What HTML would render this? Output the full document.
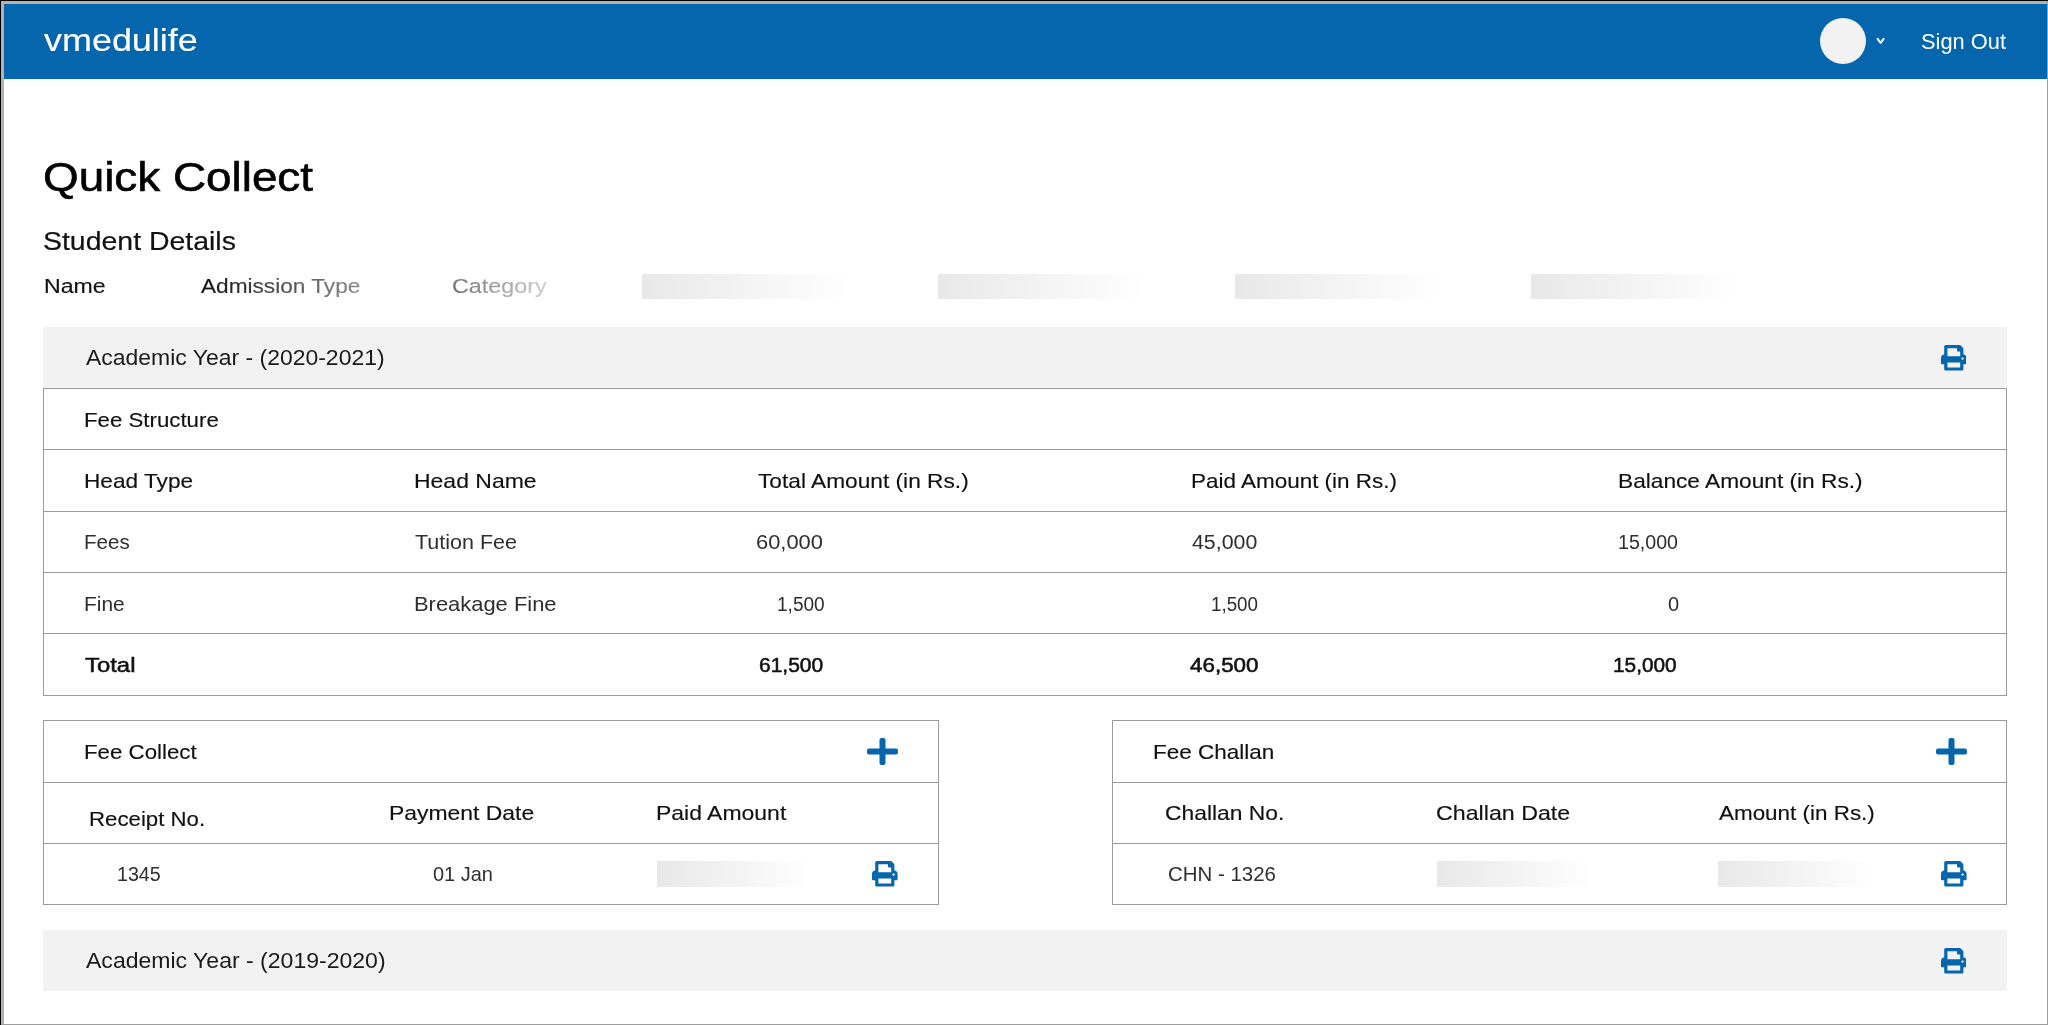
<!DOCTYPE html>
<html><head><meta charset="utf-8"><title>Quick Collect</title>
<style>
html,body{margin:0;padding:0;background:#fff;width:2048px;height:1025px;overflow:hidden;position:relative}
body{font-family:"Liberation Sans",sans-serif}
.ln,.ic,.sk,.t{position:absolute}
.sk{background:linear-gradient(90deg,#e8e8e8 0%,#fefefe 100%)}
.t{white-space:nowrap;line-height:1;transform-origin:0 0}
.g1{background:linear-gradient(90deg,#111 0%,#8a8a8a 100%);-webkit-background-clip:text;background-clip:text;color:transparent}
.g2{background:linear-gradient(90deg,#737373 0%,#d0d0d0 100%);-webkit-background-clip:text;background-clip:text;color:transparent}
</style></head><body>
<div class="ln" style="left:0;top:0;width:2048px;height:1px;background:#000"></div>
<div class="ln" style="left:0;top:0;width:1px;height:1025px;background:#000"></div>
<div class="ln" style="left:1px;top:1px;width:2047px;height:3px;background:#b3b3b3"></div>
<div class="ln" style="left:1px;top:1px;width:3px;height:1024px;background:#b3b3b3"></div>
<div class="ln" style="left:2047px;top:1px;width:1px;height:1024px;background:#a0a0a0"></div>
<div class="ln" style="left:1px;top:1024px;width:2047px;height:1px;background:#9c9c9c"></div>
<div class="ln" style="left:4px;top:4px;width:2043px;height:75px;background:#0565ad"></div>
<div class="ln" style="left:1820px;top:18px;width:46px;height:46px;border-radius:50%;background:#f2f2f2"></div>
<svg class="ic" style="left:1875px;top:36px;width:11px;height:10px" viewBox="0 0 11 10"><path d="M2.6 2.8 L5.6 7.0 L8.6 2.8" fill="none" stroke="#fff" stroke-width="2" stroke-linecap="round" stroke-linejoin="round"/></svg>
<div class="sk" style="left:642px;top:274px;width:200px;height:25px"></div>
<div class="sk" style="left:938px;top:274px;width:200px;height:25px"></div>
<div class="sk" style="left:1235px;top:274px;width:200px;height:25px"></div>
<div class="sk" style="left:1531px;top:274px;width:200px;height:25px"></div>
<div class="ln" style="left:43px;top:327px;width:1964px;height:61px;background:#f2f2f2"></div>
<svg class="ic" style="left:1940.7px;top:345px;width:25.6px;height:25.6px" viewBox="0 0 512 512"><path fill="#0565ad" d="M448 192V77.25c0-8.49-3.37-16.62-9.37-22.63L393.37 9.37c-6-6-14.14-9.37-22.63-9.37H96C78.33 0 64 14.33 64 32v160c-35.35 0-64 28.65-64 64v112c0 8.84 7.16 16 16 16h48v96c0 17.67 14.33 32 32 32h320c17.67 0 32-14.33 32-32v-96h48c8.84 0 16-7.16 16-16V256c0-35.35-28.65-64-64-64zm-64 256H128v-96h256v96zm0-224H128V64h192v48c0 8.84 7.16 16 16 16h48v96zm48 72c-13.25 0-24-10.75-24-24 0-13.26 10.75-24 24-24s24 10.74 24 24c0 13.25-10.75 24-24 24z"/></svg>
<div class="ln" style="left:43px;top:388px;width:1964px;height:1px;background:#9a9a9a"></div>
<div class="ln" style="left:43px;top:449px;width:1964px;height:1px;background:#9a9a9a"></div>
<div class="ln" style="left:43px;top:511px;width:1964px;height:1px;background:#9a9a9a"></div>
<div class="ln" style="left:43px;top:572px;width:1964px;height:1px;background:#9a9a9a"></div>
<div class="ln" style="left:43px;top:633px;width:1964px;height:1px;background:#9a9a9a"></div>
<div class="ln" style="left:43px;top:695px;width:1964px;height:1px;background:#9a9a9a"></div>
<div class="ln" style="left:43px;top:388px;width:1px;height:308px;background:#9a9a9a"></div>
<div class="ln" style="left:2006px;top:388px;width:1px;height:308px;background:#9a9a9a"></div>
<div class="ln" style="left:43px;top:720px;width:896px;height:1px;background:#9a9a9a"></div>
<div class="ln" style="left:43px;top:782px;width:896px;height:1px;background:#9a9a9a"></div>
<div class="ln" style="left:43px;top:843px;width:896px;height:1px;background:#9a9a9a"></div>
<div class="ln" style="left:43px;top:904px;width:896px;height:1px;background:#9a9a9a"></div>
<div class="ln" style="left:43px;top:720px;width:1px;height:185px;background:#9a9a9a"></div>
<div class="ln" style="left:938px;top:720px;width:1px;height:185px;background:#9a9a9a"></div>
<svg class="ic" style="left:867px;top:738px;width:31px;height:27px" viewBox="0 0 31 27"><rect x="0" y="10.5" width="31" height="6" rx="2" fill="#0565ad"/><rect x="12.5" y="0" width="6" height="27" rx="2" fill="#0565ad"/></svg>
<div class="sk" style="left:657px;top:861px;width:150px;height:26px"></div>
<svg class="ic" style="left:872px;top:861px;width:25.6px;height:25.6px" viewBox="0 0 512 512"><path fill="#0565ad" d="M448 192V77.25c0-8.49-3.37-16.62-9.37-22.63L393.37 9.37c-6-6-14.14-9.37-22.63-9.37H96C78.33 0 64 14.33 64 32v160c-35.35 0-64 28.65-64 64v112c0 8.84 7.16 16 16 16h48v96c0 17.67 14.33 32 32 32h320c17.67 0 32-14.33 32-32v-96h48c8.84 0 16-7.16 16-16V256c0-35.35-28.65-64-64-64zm-64 256H128v-96h256v96zm0-224H128V64h192v48c0 8.84 7.16 16 16 16h48v96zm48 72c-13.25 0-24-10.75-24-24 0-13.26 10.75-24 24-24s24 10.74 24 24c0 13.25-10.75 24-24 24z"/></svg>
<div class="ln" style="left:1112px;top:720px;width:895px;height:1px;background:#9a9a9a"></div>
<div class="ln" style="left:1112px;top:782px;width:895px;height:1px;background:#9a9a9a"></div>
<div class="ln" style="left:1112px;top:843px;width:895px;height:1px;background:#9a9a9a"></div>
<div class="ln" style="left:1112px;top:904px;width:895px;height:1px;background:#9a9a9a"></div>
<div class="ln" style="left:1112px;top:720px;width:1px;height:185px;background:#9a9a9a"></div>
<div class="ln" style="left:2006px;top:720px;width:1px;height:185px;background:#9a9a9a"></div>
<svg class="ic" style="left:1936px;top:738px;width:31px;height:27px" viewBox="0 0 31 27"><rect x="0" y="10.5" width="31" height="6" rx="2" fill="#0565ad"/><rect x="12.5" y="0" width="6" height="27" rx="2" fill="#0565ad"/></svg>
<div class="sk" style="left:1437px;top:861px;width:149px;height:26px"></div>
<div class="sk" style="left:1718px;top:861px;width:150px;height:26px"></div>
<svg class="ic" style="left:1941px;top:861px;width:25.6px;height:25.6px" viewBox="0 0 512 512"><path fill="#0565ad" d="M448 192V77.25c0-8.49-3.37-16.62-9.37-22.63L393.37 9.37c-6-6-14.14-9.37-22.63-9.37H96C78.33 0 64 14.33 64 32v160c-35.35 0-64 28.65-64 64v112c0 8.84 7.16 16 16 16h48v96c0 17.67 14.33 32 32 32h320c17.67 0 32-14.33 32-32v-96h48c8.84 0 16-7.16 16-16V256c0-35.35-28.65-64-64-64zm-64 256H128v-96h256v96zm0-224H128V64h192v48c0 8.84 7.16 16 16 16h48v96zm48 72c-13.25 0-24-10.75-24-24 0-13.26 10.75-24 24-24s24 10.74 24 24c0 13.25-10.75 24-24 24z"/></svg>
<div class="ln" style="left:43px;top:930px;width:1964px;height:61px;background:#f2f2f2"></div>
<svg class="ic" style="left:1940.7px;top:948.3px;width:25.6px;height:25.6px" viewBox="0 0 512 512"><path fill="#0565ad" d="M448 192V77.25c0-8.49-3.37-16.62-9.37-22.63L393.37 9.37c-6-6-14.14-9.37-22.63-9.37H96C78.33 0 64 14.33 64 32v160c-35.35 0-64 28.65-64 64v112c0 8.84 7.16 16 16 16h48v96c0 17.67 14.33 32 32 32h320c17.67 0 32-14.33 32-32v-96h48c8.84 0 16-7.16 16-16V256c0-35.35-28.65-64-64-64zm-64 256H128v-96h256v96zm0-224H128V64h192v48c0 8.84 7.16 16 16 16h48v96zm48 72c-13.25 0-24-10.75-24-24 0-13.26 10.75-24 24-24s24 10.74 24 24c0 13.25-10.75 24-24 24z"/></svg>
<div class="t" style="left:43.80px;top:23.91px;font-size:32.00px;transform:scaleX(1.1230);color:#fff;-webkit-text-stroke:0.15px #fff;">vmedulife</div>
<div class="t" style="left:1921.00px;top:30.70px;font-size:21.62px;transform:scaleX(1.0109);color:#fff;">Sign Out</div>
<div class="t" style="left:43.38px;top:157.32px;font-size:40.97px;transform:scaleX(1.1189);color:#000;-webkit-text-stroke:0.6px #000;">Quick Collect</div>
<div class="t" style="left:43.39px;top:229.13px;font-size:25.60px;transform:scaleX(1.1113);color:#111;-webkit-text-stroke:0.2px #111;">Student Details</div>
<div class="t" style="left:43.57px;top:276.46px;font-size:20.48px;transform:scaleX(1.1294);color:#111;-webkit-text-stroke:0.15px #111;">Name</div>
<div class="t g1" style="left:200.50px;top:276.46px;font-size:20.48px;transform:scaleX(1.1055);-webkit-text-stroke:0.15px transparent;">Admission Type</div>
<div class="t g2" style="left:452.06px;top:276.46px;font-size:20.48px;transform:scaleX(1.1410);-webkit-text-stroke:0.15px transparent;">Category</div>
<div class="t" style="left:85.70px;top:347.94px;font-size:21.34px;transform:scaleX(1.0762);color:#1a1a1a;">Academic Year - (2020-2021)</div>
<div class="t" style="left:84.43px;top:409.72px;font-size:20.77px;transform:scaleX(1.0712);color:#111;-webkit-text-stroke:0.15px #111;">Fee Structure</div>
<div class="t" style="left:84.01px;top:471.22px;font-size:20.77px;transform:scaleX(1.0899);color:#111;-webkit-text-stroke:0.15px #111;">Head Type</div>
<div class="t" style="left:413.89px;top:471.22px;font-size:20.77px;transform:scaleX(1.1064);color:#111;-webkit-text-stroke:0.15px #111;">Head Name</div>
<div class="t" style="left:757.50px;top:471.22px;font-size:20.77px;transform:scaleX(1.0932);color:#111;-webkit-text-stroke:0.15px #111;">Total Amount (in Rs.)</div>
<div class="t" style="left:1190.92px;top:471.22px;font-size:20.77px;transform:scaleX(1.0817);color:#111;-webkit-text-stroke:0.15px #111;">Paid Amount (in Rs.)</div>
<div class="t" style="left:1618.11px;top:471.22px;font-size:20.77px;transform:scaleX(1.0925);color:#111;-webkit-text-stroke:0.15px #111;">Balance Amount (in Rs.)</div>
<div class="t" style="left:84.01px;top:532.42px;font-size:20.77px;transform:scaleX(0.9898);color:#2e2e2e;">Fees</div>
<div class="t" style="left:415.00px;top:532.42px;font-size:20.77px;transform:scaleX(1.0349);color:#2e2e2e;">Tution Fee</div>
<div class="t" style="left:756.45px;top:532.42px;font-size:20.77px;transform:scaleX(1.0529);color:#2e2e2e;">60,000</div>
<div class="t" style="left:1192.20px;top:532.42px;font-size:20.77px;transform:scaleX(1.0282);color:#2e2e2e;">45,000</div>
<div class="t" style="left:1617.76px;top:532.42px;font-size:20.77px;transform:scaleX(0.9447);color:#2e2e2e;">15,000</div>
<div class="t" style="left:84.09px;top:593.72px;font-size:20.77px;transform:scaleX(1.0071);color:#2e2e2e;">Fine</div>
<div class="t" style="left:413.94px;top:593.72px;font-size:20.77px;transform:scaleX(1.0553);color:#2e2e2e;">Breakage Fine</div>
<div class="t" style="left:776.68px;top:593.72px;font-size:20.77px;transform:scaleX(0.9169);color:#2e2e2e;">1,500</div>
<div class="t" style="left:1211.49px;top:593.72px;font-size:20.77px;transform:scaleX(0.9050);color:#2e2e2e;">1,500</div>
<div class="t" style="left:1667.90px;top:593.72px;font-size:20.77px;transform:scaleX(0.9636);color:#2e2e2e;">0</div>
<div class="t" style="left:85.00px;top:654.92px;font-size:20.77px;transform:scaleX(1.1500);color:#111;-webkit-text-stroke:0.55px #111;">Total</div>
<div class="t" style="left:758.99px;top:654.92px;font-size:20.77px;transform:scaleX(1.0109);color:#111;-webkit-text-stroke:0.55px #111;">61,500</div>
<div class="t" style="left:1190.10px;top:654.92px;font-size:20.77px;transform:scaleX(1.0791);color:#111;-webkit-text-stroke:0.55px #111;">46,500</div>
<div class="t" style="left:1613.40px;top:654.92px;font-size:20.77px;transform:scaleX(1.0012);color:#111;-webkit-text-stroke:0.55px #111;">15,000</div>
<div class="t" style="left:83.93px;top:741.72px;font-size:20.77px;transform:scaleX(1.0722);color:#111;-webkit-text-stroke:0.15px #111;">Fee Collect</div>
<div class="t" style="left:1152.62px;top:741.72px;font-size:20.77px;transform:scaleX(1.0839);color:#111;-webkit-text-stroke:0.15px #111;">Fee Challan</div>
<div class="t" style="left:88.73px;top:808.62px;font-size:20.77px;transform:scaleX(1.0706);color:#111;-webkit-text-stroke:0.15px #111;">Receipt No.</div>
<div class="t" style="left:388.50px;top:803.22px;font-size:20.77px;transform:scaleX(1.1036);color:#111;-webkit-text-stroke:0.15px #111;">Payment Date</div>
<div class="t" style="left:656.39px;top:803.22px;font-size:20.77px;transform:scaleX(1.1064);color:#111;-webkit-text-stroke:0.15px #111;">Paid Amount</div>
<div class="t" style="left:1165.30px;top:803.22px;font-size:20.77px;transform:scaleX(1.0998);color:#111;-webkit-text-stroke:0.15px #111;">Challan No.</div>
<div class="t" style="left:1436.48px;top:803.22px;font-size:20.77px;transform:scaleX(1.1180);color:#111;-webkit-text-stroke:0.15px #111;">Challan Date</div>
<div class="t" style="left:1718.80px;top:803.22px;font-size:20.77px;transform:scaleX(1.0801);color:#111;-webkit-text-stroke:0.15px #111;">Amount (in Rs.)</div>
<div class="t" style="left:116.95px;top:864.32px;font-size:20.77px;transform:scaleX(0.9458);color:#2e2e2e;">1345</div>
<div class="t" style="left:432.80px;top:864.32px;font-size:20.77px;transform:scaleX(0.9618);color:#2e2e2e;">01 Jan</div>
<div class="t" style="left:1168.02px;top:864.32px;font-size:20.77px;transform:scaleX(0.9841);color:#2e2e2e;">CHN - 1326</div>
<div class="t" style="left:85.70px;top:951.24px;font-size:21.34px;transform:scaleX(1.0798);color:#1a1a1a;">Academic Year - (2019-2020)</div>
</body></html>
